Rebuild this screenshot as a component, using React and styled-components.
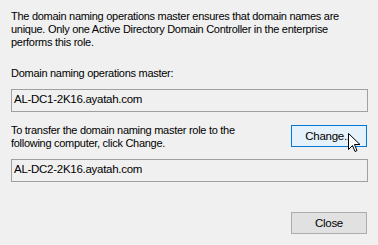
import styled, { createGlobalStyle } from "styled-components"

const Global = createGlobalStyle`
	html, body {
		margin: 0;
		padding: 0;
		background: #f0f0f0;
	}
	body {
		font-family: "Liberation Sans", Arial, sans-serif;
		font-size: 11px;
		letter-spacing: -0.28px;
		color: #000;
	}
`

const Dialog = styled.div`
	width: 378px;
	height: 245px;
	box-sizing: border-box;
	padding: 10px 10px 0 11px;
	display: flex;
	flex-direction: column;
	background: #f0f0f0;
	position: relative;
`
const Text = styled.p`
	margin: 0;
	line-height: 13px;
	margin-top: ${({ $top }) => $top || 0}px;
`
const Field = styled.div`
	height: 23px;
	box-sizing: border-box;
	border: 1px solid #a0a0a0;
	background: #f0f0f0;
	padding: 2px 2px 0;
	line-height: 14px;
	font-size: 11.5px;
	margin-top: ${({ $top }) => $top || 0}px;
`
const Row = styled.div`
	display: flex;
	justify-content: space-between;
	align-items: flex-start;
	margin-top: ${({ $top }) => $top || 0}px;
`
const Button = styled.div`
	width: 76px;
	height: 22px;
	box-sizing: border-box;
	display: flex;
	align-items: center;
	justify-content: center;
	font-size: 11.5px;
	border: 1px solid ${({ $hover }) => ($hover ? "#0078d7" : "#adadad")};
	background: ${({ $hover }) => ($hover ? "#e5f1fb" : "#e1e1e1")};
	margin-top: ${({ $top }) => $top || 0}px;
	margin-right: ${({ $right }) => $right || 0}px;
`
const Footer = styled.div`
	display: flex;
	justify-content: flex-end;
	margin-top: 30px;
`
const Cursor = styled.svg`
	position: absolute;
	left: 348px;
	top: 133px;
`

export default function App() {
	return (
		<>
			<Global />
			<Dialog>
				<Text>
					The domain naming operations master ensures that domain names are
					<br />
					unique. Only one Active Directory Domain Controller in the enterprise
					<br />
					performs this role.
				</Text>
				<Text $top={18}>Domain naming operations master:</Text>
				<Field $top={9}>AL-DC1-2K16.ayatah.com</Field>
				<Row $top={12}>
					<Text>
						To transfer the domain naming master role to the
						<br />
						following computer, click Change.
					</Text>
					<Button $hover $top={1} $right={1}>Change...</Button>
				</Row>
				<Field $top={9}>AL-DC2-2K16.ayatah.com</Field>
				<Footer>
					<Button $right={1}>Close</Button>
				</Footer>
				<Cursor width="13" height="21" viewBox="0 0 13 21">
					<path
						d="M0.5 0.5 L0.5 16.5 L4.5 12.5 L7 18.5 L9 17.5 L6.5 11.5 L12 11.5 Z"
						fill="#fff"
						stroke="#000"
						strokeWidth="1"
						strokeLinejoin="miter"
					/>
				</Cursor>
			</Dialog>
		</>
	)
}
